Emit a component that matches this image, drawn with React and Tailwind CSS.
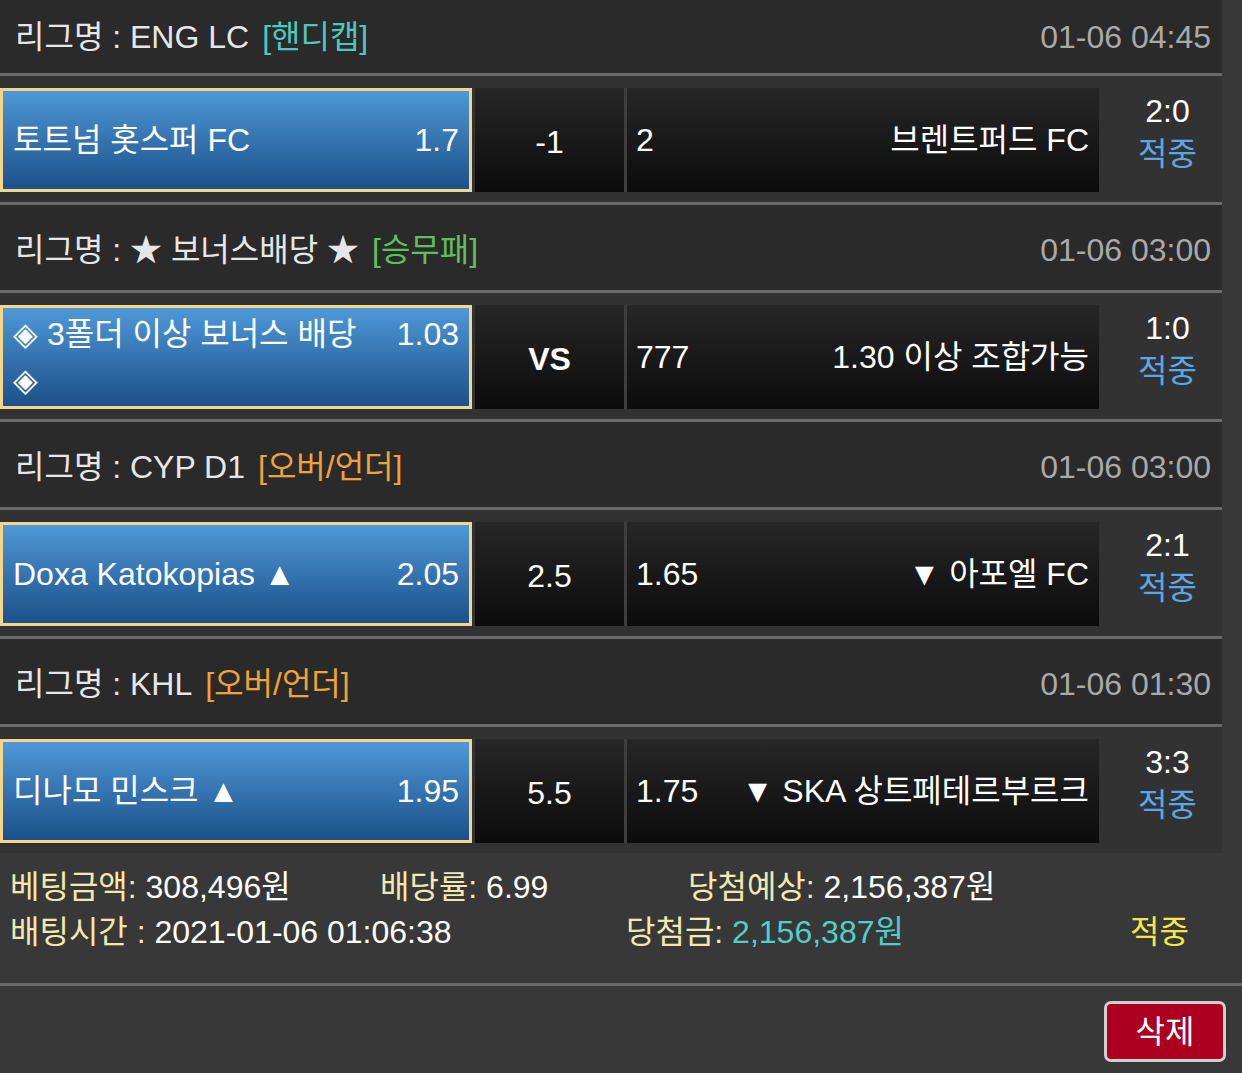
import React from 'react'

// 배팅 내역 상세 (모바일 화면)

const FONT = "font-['Liberation_Sans','Noto_Sans_CJK_KR',sans-serif]"

const matches = [
  {
    league: 'ENG LC',
    tag: '[핸디캡]',
    tagColor: 'text-[#4ec8bf]',
    date: '01-06 04:45',
    home: '토트넘 홋스퍼 FC',
    homeOdds: '1.7',
    mid: '-1',
    awayOdds: '2',
    away: '브렌트퍼드 FC',
    score: '2:0',
  },
  {
    league: '★ 보너스배당 ★',
    tag: '[승무패]',
    tagColor: 'text-[#5fbf5a]',
    date: '01-06 03:00',
    home: (
      <>
        ◈ 3폴더 이상 보너스 배당
        <br />◈
      </>
    ),
    homeOdds: '1.03',
    mid: 'VS',
    bold: true,
    awayOdds: '777',
    away: '1.30 이상 조합가능',
    score: '1:0',
  },
  {
    league: 'CYP D1',
    tag: '[오버/언더]',
    tagColor: 'text-[#f0a23a]',
    date: '01-06 03:00',
    home: 'Doxa Katokopias ▲',
    homeOdds: '2.05',
    mid: '2.5',
    awayOdds: '1.65',
    away: '▼ 아포엘 FC',
    score: '2:1',
  },
  {
    league: 'KHL',
    tag: '[오버/언더]',
    tagColor: 'text-[#f0a23a]',
    date: '01-06 01:30',
    home: '디나모 민스크 ▲',
    homeOdds: '1.95',
    mid: '5.5',
    awayOdds: '1.75',
    away: '▼ SKA 상트페테르부르크',
    score: '3:3',
  },
]

function Line() {
  return <div className="h-[3px] bg-[#6a6a6a]" />
}

function LeagueHeader({ m, first }) {
  return (
    <div
      className={`flex items-center justify-between bg-[#2a2a2a] pl-[15px] pr-[11px] ${
        first ? 'h-[73px]' : 'h-[85px] pt-[4px]'
      }`}
    >
      <div className="flex items-center">
        <span className="text-[#e6e6e6]">리그명 : {m.league}</span>
        <span className={`ml-[13px] ${m.tagColor}`}>{m.tag}</span>
      </div>
      <span className="text-[#a9a9a9]">{m.date}</span>
    </div>
  )
}

function MatchRow({ m }) {
  return (
    <div className="flex bg-[#323232] pt-[12px] pb-[10px]">
      {/* 홈 (선택됨) */}
      <div className="flex h-[104px] w-[472px] items-center border-[3px] border-[#f3d68c] bg-linear-to-b from-[#4f98d8] to-[#1c5189] pl-[10px] pr-[10px] text-white">
        <div className="flex w-full items-start justify-between leading-[46px]">
          <span>{m.home}</span>
          <span>{m.homeOdds}</span>
        </div>
      </div>

      {/* 기준점 */}
      <div
        className={`ml-[3px] flex h-[104px] w-[149px] items-center justify-center bg-linear-to-b from-[#272727] to-[#0c0c0c] pt-[4px] text-white ${
          m.bold ? 'font-bold' : ''
        }`}
      >
        {m.mid}
      </div>

      {/* 원정 */}
      <div className="flex h-[104px] w-[475px] items-center justify-between border-l-[3px] border-[#3e3e3e] bg-linear-to-b from-[#272727] to-[#0c0c0c] pl-[9px] pr-[10px] text-white">
        <span>{m.awayOdds}</span>
        <span>{m.away}</span>
      </div>

      {/* 결과 */}
      <div className="flex h-[104px] w-[123px] flex-col items-center justify-start pt-[2px] pl-[14px] leading-[43px]">
        <span className="text-white">{m.score}</span>
        <span className="text-[#5aa7e6]">적중</span>
      </div>
    </div>
  )
}

export default function App() {
  return (
    <div className={`min-h-[1073px] w-[1242px] bg-[#383838] text-[32px] ${FONT}`}>
      <div className="w-[1222px]">
        {matches.map((m, i) => (
          <div key={i}>
            <LeagueHeader m={m} first={i === 0} />
            <Line />
            <MatchRow m={m} />
            {i < matches.length - 1 && <Line />}
          </div>
        ))}
      </div>

      {/* 합계 */}
      <div className="px-[10px] pt-[12px] pb-[28px] leading-[45px]">
        <div className="flex">
          <span className="w-[370px]">
            <span className="text-[#f2e8b0]">베팅금액: </span>
            <span className="text-white">308,496원</span>
          </span>
          <span className="w-[308px]">
            <span className="text-[#f2e8b0]">배당률: </span>
            <span className="text-white">6.99</span>
          </span>
          <span>
            <span className="text-[#f2e8b0]">당첨예상: </span>
            <span className="text-white">2,156,387원</span>
          </span>
        </div>
        <div className="flex">
          <span className="w-[616px]">
            <span className="text-[#f2e8b0]">배팅시간 : </span>
            <span className="text-white">2021-01-06 01:06:38</span>
          </span>
          <span className="w-[504px]">
            <span className="text-[#f2e8b0]">당첨금: </span>
            <span className="text-[#4fcfc8]">2,156,387원</span>
          </span>
          <span className="text-[#f3e64a]">적중</span>
        </div>
      </div>

      <div className="h-[3px] bg-[#6a6a6a]" />

      <div className="flex justify-end pt-[15px] pr-[16px]">
        <button
          type="button"
          className="flex h-[61px] w-[122px] items-center justify-center rounded-[7px] border-[3px] border-[#cfcfcf] bg-[#ad0020] text-white"
        >
          삭제
        </button>
      </div>
    </div>
  )
}
